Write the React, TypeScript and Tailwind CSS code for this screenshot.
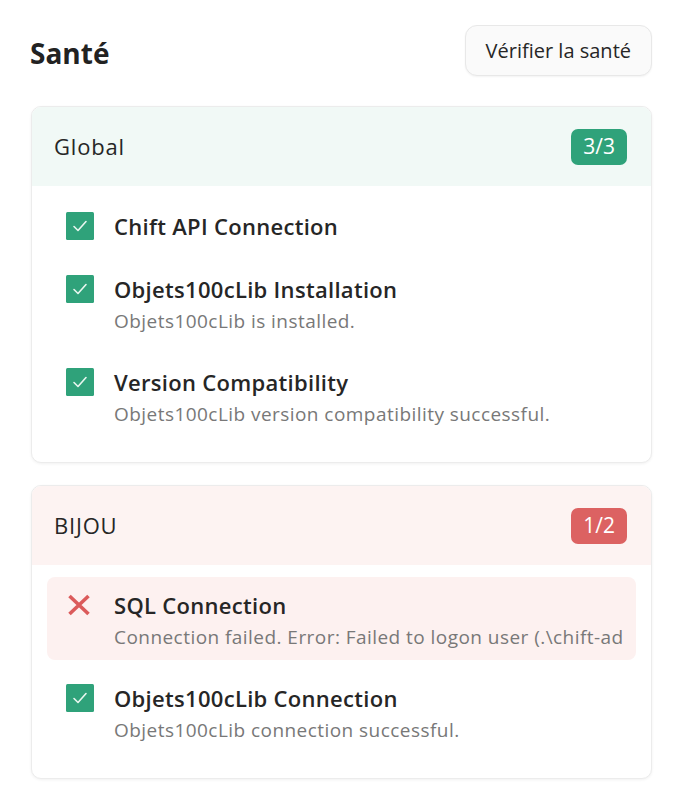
import React from 'react'

type Check = {
    name: string;
    message?: string;
    ok: boolean;
}

type Group = {
    title: string;
    checks: Check[];
}

const groups: Group[] = [
    {
        title: 'Global',
        checks: [
            { name: 'Chift API Connection', ok: true },
            { name: 'Objets100cLib Installation', message: 'Objets100cLib is installed.', ok: true },
            { name: 'Version Compatibility', message: 'Objets100cLib version compatibility successful.', ok: true },
        ],
    },
    {
        title: 'BIJOU',
        checks: [
            {
                name: 'SQL Connection',
                message: 'Connection failed. Error: Failed to logon user (.\\chift-admin): The user name or password is incorrect.',
                ok: false,
            },
            { name: 'Objets100cLib Connection', message: 'Objets100cLib connection successful.', ok: true },
        ],
    },
]

function CheckIcon() {
    return (
        <svg width="28" height="28" viewBox="0 0 28 28">
            <rect x="0" y="0" width="28" height="28" rx="1.5" fill="#2fa27a" />
            <path d="M8 14.5 L12 18.5 L20 9.5" fill="none" stroke="#e8f6ef" strokeWidth="1.6" strokeLinecap="round" strokeLinejoin="round" />
        </svg>
    )
}

function CrossIcon() {
    return (
        <svg width="28" height="28" viewBox="0 0 28 28">
            <path d="M3.5 5 L22.5 23 M22.5 5 L3.5 23" stroke="#db5b5b" strokeWidth="3.6" strokeLinecap="butt" />
        </svg>
    )
}

function CheckRow({ check }: { check: Check }) {
    return (
        <div className={`flex gap-[20px] rounded-[8px] pl-[19px] pr-[13px] pt-[14px] pb-[11px] ${check.ok ? '' : 'bg-[#fdf1f0]'}`}>
            <div className="flex h-[28px] w-[28px] shrink-0 items-center justify-center">
                {check.ok ? <CheckIcon /> : <CrossIcon />}
            </div>
            <div className="min-w-0 flex-1">
                <div className="text-[22px] leading-[28px] font-semibold tracking-[0.3px] text-[#262626]">{check.name}</div>
                {check.message && (
                    <div className="mt-[6px] overflow-hidden whitespace-nowrap text-[19px] leading-[24px] tracking-[0.45px] text-[#787878]">
                        {check.message}
                    </div>
                )}
            </div>
        </div>
    )
}

function GroupCard({ group }: { group: Group }) {
    const passed = group.checks.filter(c => c.ok).length;
    const allOk = passed === group.checks.length;

    return (
        <div className="overflow-hidden rounded-[10px] border border-[#ececec] bg-white shadow-[0_1px_3px_rgba(0,0,0,0.06)]">
            <div className={`flex h-[79px] items-center justify-between pl-[22px] pr-[24px] ${allOk ? 'bg-[#f1f9f6]' : 'bg-[#fdf3f2]'}`}>
                <span className="text-[22px] tracking-[0.8px] text-[#262626]">{group.title}</span>
                <span className={`flex h-[36px] items-center rounded-[7px] px-[12px] text-[21px] text-white ${allOk ? 'bg-[#2fa27a]' : 'bg-[#dc6262]'}`}>
                    {passed}/{group.checks.length}
                </span>
            </div>
            <div className="flex flex-col gap-[10px] px-[15px] pt-[12px] pb-[25px]">
                {group.checks.map(c => (
                    <CheckRow key={c.name} check={c} />
                ))}
            </div>
        </div>
    )
}

export default function App() {
    return (
        <div className="min-h-[806px] w-[688px] bg-white pl-[30px] pr-[36px] pt-[25px] font-['Open_Sans','Noto_Sans',sans-serif]">
            {/* En-tête */}
            <div className="flex items-center justify-between">
                <h1 className="pt-[5px] text-[28px] font-bold text-[#222]">Santé</h1>
                <button className="h-[51px] rounded-[12px] border border-[#e8e8e8] bg-[#fafafa] px-[20px] text-[20px] text-[#262626] shadow-[0_1px_2px_rgba(0,0,0,0.05)]">
                    Vérifier la santé
                </button>
            </div>

            <div className="mt-[30px] flex flex-col gap-[22px] pl-px">
                {groups.map(g => (
                    <GroupCard key={g.title} group={g} />
                ))}
            </div>
        </div>
    )
}
